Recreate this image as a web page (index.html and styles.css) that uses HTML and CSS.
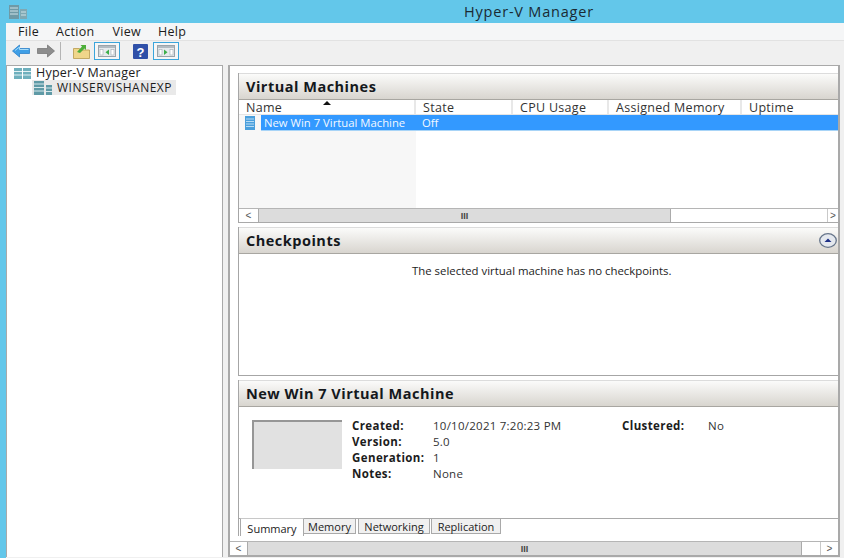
FILE: index.html
```html
<!DOCTYPE html>
<html lang="en">
<head>
<meta charset="UTF-8" />
<title>Hyper-V Manager</title>
<link rel="stylesheet" href="styles.css">
</head>
<body>
<header class="titlebar">
  <svg class="title-icon" width="18" height="14" viewBox="0 0 18 14">
    <rect x="0" y="0" width="10" height="14" fill="#6f9aa6"/>
    <path d="M1 3h8M1 6h8M1 9h8" stroke="#cfe3e8" stroke-width="1"/>
    <rect x="11" y="4" width="7" height="10" fill="#7fa8b3"/>
    <path d="M12 7h5M12 10h5" stroke="#cfe3e8" stroke-width="1"/>
  </svg>
  <span class="title-text">Hyper-V Manager</span>
</header>

<div class="window">
  <nav class="menubar">
    <span class="menu-item menu-file">File</span>
    <span class="menu-item menu-action">Action</span>
    <span class="menu-item menu-view">View</span>
    <span class="menu-item">Help</span>
  </nav>

  <div class="toolbar">
    <svg class="tool tool-back" width="18" height="14" viewBox="0 0 18 14">
      <path d="M0.5 7L7.5 1v3.5H17.5v5H7.5V13z" fill="#3f9fe6" stroke="#1f78c4" stroke-width="0.7"/>
      <path d="M3 6.5L7.5 3v2.5h9" fill="none" stroke="#a8dcf8" stroke-width="1"/>
    </svg>
    <svg class="tool tool-forward" width="18" height="14" viewBox="0 0 18 14">
      <path d="M17.5 7L10.5 1v3.5H0.5v5H10.5V13z" fill="#8d8d8d" stroke="#6f6f6f" stroke-width="0.7"/>
    </svg>
    <span class="tool-sep"></span>
    <svg class="tool tool-folder" width="17" height="15" viewBox="0 0 17 15">
      <path d="M0.5 4.5h6l1 1.5h9v8.5H0.5z" fill="#f0d68a" stroke="#b89a4c" stroke-width="0.8"/>
      <path d="M4 8L9 2.5 7.5 1H13v5l-1.5-1.5L7 9z" fill="#4dae3a"/>
    </svg>
    <span class="tool-box tool-box-first">
      <svg width="18" height="12" viewBox="0 0 18 12">
        <rect x="0.5" y="0.5" width="17" height="11" fill="#e6eaed" stroke="#9aa3aa"/>
        <rect x="1" y="1" width="16" height="2" fill="#b3bbc1"/>
        <rect x="2" y="4.500" width="3" height="5.500" fill="#fff" stroke="#a3acb3" stroke-width="0.6"/>
        <rect x="13" y="4.500" width="3" height="5.500" fill="#fff" stroke="#a3acb3" stroke-width="0.6"/>
        <path d="M11 4.500v5.500L7.500 7.250z" fill="#3dae4a"/>
      </svg>
    </span>
    <svg class="tool tool-help" width="15" height="15" viewBox="0 0 15 15">
      <rect width="15" height="15" rx="1" fill="#2f50a8"/>
      <text x="7.5" y="12.5" class="help-mark">?</text>
    </svg>
    <span class="tool-box">
      <svg width="18" height="12" viewBox="0 0 18 12">
        <rect x="0.5" y="0.5" width="17" height="11" fill="#e6eaed" stroke="#9aa3aa"/>
        <rect x="1" y="1" width="16" height="2" fill="#b3bbc1"/>
        <rect x="2" y="4.500" width="3" height="5.500" fill="#fff" stroke="#a3acb3" stroke-width="0.6"/>
        <rect x="13" y="4.500" width="3" height="5.500" fill="#fff" stroke="#a3acb3" stroke-width="0.6"/>
        <path d="M7 4.500v5.500l3.500-2.750z" fill="#3dae4a"/>
      </svg>
    </span>
  </div>

  <div class="panes">
    <aside class="tree">
      <div class="tree-root">
        <svg width="17" height="11" viewBox="0 0 17 11">
          <rect width="8" height="11" fill="#6fb0bd"/>
          <rect x="9" width="8" height="11" fill="#6fb0bd"/>
          <path d="M0 3.500h8M0 7h8M9 3.500h8M9 7h8" stroke="#e3f1f4" stroke-width="1"/>
        </svg>
        <span>Hyper-V Manager</span>
      </div>
      <div class="tree-node">
        <svg width="18" height="14" viewBox="0 0 18 14">
          <rect width="10" height="14" fill="#5f9aa6"/>
          <path d="M0 3h10M0 6.500h10M0 10h10" stroke="#d7e8ec" stroke-width="1"/>
          <rect x="12" y="4" width="6" height="10" fill="#5f9aa6"/>
          <path d="M12 7h6M12 10.500h6" stroke="#d7e8ec" stroke-width="1"/>
        </svg>
        <span>WINSERVISHANEXP</span>
      </div>
    </aside>

    <main class="content">
      <div class="panels">
        <section class="panel panel-vms">
          <h2 class="panel-head">Virtual Machines</h2>
          <div class="columns">
            <div class="col col-name">Name<span class="sort-mark"></span></div>
            <div class="col col-state">State</div>
            <div class="col col-cpu">CPU Usage</div>
            <div class="col col-mem">Assigned Memory</div>
            <div class="col col-up">Uptime</div>
          </div>
          <div class="vm-list">
            <div class="vm-row">
              <svg class="vm-icon" width="10" height="14" viewBox="0 0 10 14">
                <rect width="10" height="14" fill="#4a9fdc"/>
                <path d="M1 3h8M1 5.500h8M1 8h8M1 10.500h8" stroke="#b7dcf5" stroke-width="1"/>
              </svg>
              <div class="vm-selected">
                <span class="vm-name">New Win 7 Virtual Machine</span>
                <span>Off</span>
              </div>
            </div>
          </div>
          <div class="hscroll">
            <span class="sb-btn sb-left">&lt;</span>
            <span class="sb-thumb sb-thumb-vm">III</span>
            <span class="sb-rest"></span>
            <span class="sb-btn sb-right">&gt;</span>
          </div>
        </section>

        <section class="panel panel-checkpoints">
          <h2 class="panel-head panel-head-row">
            Checkpoints
            <svg width="18" height="15" viewBox="0 0 18 15">
              <ellipse cx="9" cy="7.500" rx="8.300" ry="6.800" fill="#e4e8ee" stroke="#66758a" stroke-width="1.300"/>
              <path d="M5.500 9L9 5.500 12.500 9z" fill="#1d2f86"/>
            </svg>
          </h2>
          <p class="empty-note">The selected virtual machine has no checkpoints.</p>
        </section>

        <section class="panel panel-details">
          <h2 class="panel-head">New Win 7 Virtual Machine</h2>
          <div class="details-body">
            <div class="thumb"></div>
            <dl class="facts">
              <dt>Created:</dt><dd>10/10/2021 7:20:23 PM</dd>
              <dt>Version:</dt><dd>5.0</dd>
              <dt>Generation:</dt><dd>1</dd>
              <dt>Notes:</dt><dd>None</dd>
            </dl>
            <dl class="facts facts-side">
              <dt>Clustered:</dt><dd>No</dd>
            </dl>
          </div>
          <div class="tabs">
            <span class="tab tab-active">Summary</span>
            <span class="tab tab-memory">Memory</span>
            <span class="tab tab-network">Networking</span>
            <span class="tab tab-replication">Replication</span>
          </div>
        </section>
      </div>

      <div class="hscroll hscroll-outer">
        <span class="sb-btn sb-left-outer">&lt;</span>
        <span class="sb-thumb sb-thumb-outer">III</span>
        <span class="sb-rest"></span>
        <span class="sb-btn sb-right">&gt;</span>
      </div>
    </main>
  </div>
</div>
</body>
</html>
```

FILE: styles.css
```css
* {
  box-sizing: border-box;
}

html, body {
  margin: 0;
  height: 558px;
  overflow: hidden;
}

body {
  background: #63c7ea;
  font-family: "Open Sans", "Noto Sans", sans-serif;
  font-size: 11px;
  color: #1c1c1c;
  display: flex;
  flex-direction: column;
}

/* Title bar */
.titlebar {
  height: 23px;
  flex: none;
  display: flex;
  align-items: center;
  padding-left: 9px;
}

.title-icon {
  flex: none;
}

.title-text {
  margin-left: 437px;
  font-size: 14.5px;
  letter-spacing: 0.8px;
  color: #1a2a33;
}

.window {
  flex: 1;
  margin-left: 6px;
  display: flex;
  flex-direction: column;
  background: #f0f0f0;
  min-height: 0;
}

/* Menu and toolbar */
.menubar {
  height: 18px;
  flex: none;
  display: flex;
  align-items: center;
  padding: 0 0 1px 12px;
  background: #f5f6f7;
  border-bottom: 1px solid #e2e2e2;
  font-size: 12.5px;
  letter-spacing: 0.3px;
}

.menu-file { margin-right: 17px; }
.menu-action { margin-right: 18px; }
.menu-view { margin-right: 17px; }

.toolbar {
  height: 24px;
  flex: none;
  display: flex;
  align-items: center;
  padding: 0 0 4px 6px;
  background: #f0f0f0;
}

.tool {
  flex: none;
}

.tool-forward { margin-left: 7px; }

.tool-sep {
  width: 1px;
  height: 18px;
  margin-left: 5px;
  background: #b4b4b4;
}

.tool-folder { margin-left: 12px; }

.tool-box {
  width: 26px;
  height: 18px;
  margin-left: 4px;
  border: 1px solid #3aa5dc;
  background: #f6f6f6;
  display: flex;
  align-items: center;
  justify-content: center;
}

.tool-help { margin-left: 13px; }
.tool-help + .tool-box { margin-left: 5px; }

.help-mark {
  font-family: "Liberation Sans", sans-serif;
  font-size: 13px;
  font-weight: 700;
  fill: #fff;
  text-anchor: middle;
}

/* Two panes */
.panes {
  flex: 1;
  min-height: 0;
  display: flex;
  gap: 5px;
  padding-bottom: 1px;
}

.tree {
  width: 217px;
  flex: none;
  background: #fff;
  border: 1px solid #a9a9a9;
  border-bottom: 0;
  padding: 0 0 0 7px;
}

.tree-root {
  display: flex;
  align-items: center;
  gap: 5px;
  height: 14px;
  line-height: 14px;
  font-size: 12.5px;
  letter-spacing: 0.2px;
}

.tree-node {
  display: flex;
  align-items: center;
  gap: 5px;
  width: 144px;
  height: 15px;
  line-height: 15px;
  margin-left: 18px;
  background: #e9e9e9;
  padding-left: 2px;
  font-size: 12px;
  letter-spacing: 0.5px;
  white-space: nowrap;
}

.content {
  width: 612px;
  flex: none;
  background: #fff;
  border: 1px solid #a9a9a9;
  border-right-width: 2px;
  border-left-width: 2px;
  display: flex;
  flex-direction: column;
}

.panels {
  flex: 1;
  min-height: 0;
  padding: 7px 0 0 8px;
  display: flex;
  flex-direction: column;
}

/* Panels */
.panel {
  border-left: 1px solid #a6a6a6;
  display: flex;
  flex-direction: column;
}

.panel-head {
  height: 27px;
  flex: none;
  margin: 0;
  padding: 0 0 0 7px;
  display: flex;
  align-items: center;
  font-size: 14.5px;
  font-weight: 700;
  letter-spacing: 0.5px;
  color: #14181c;
  background: linear-gradient(#fbfbfa, #d8d5cf);
  border-top: 1px solid #dcdcdc;
  border-bottom: 1px solid #a8a6a1;
}

.panel-head-row {
  justify-content: space-between;
  padding-right: 1px;
}

.panel-vms {
  height: 150px;
  flex: none;
}

.columns {
  height: 15px;
  flex: none;
  display: flex;
  align-items: center;
  background: #fff;
  border-bottom: 1px solid #e5e5e5;
  color: #333;
  font-size: 12.5px;
  letter-spacing: 0.3px;
}

.col {
  height: 100%;
  padding-left: 7px;
  border-right: 2px solid #e8e8e8;
  display: flex;
  align-items: center;
}

.col-name { width: 177px; }
.col-state { width: 97px; }
.col-cpu { width: 96px; }
.col-mem { width: 133px; }
.col-up { flex: 1; border-right: 0; }

.sort-mark {
  width: 0;
  height: 0;
  margin: -8px 0 0 41px;
  border-left: 4px solid transparent;
  border-right: 4px solid transparent;
  border-bottom: 4px solid #111;
}

.vm-list {
  flex: 1;
  min-height: 0;
  background: linear-gradient(90deg, #f7f7f7 177px, #fff 177px);
}

.vm-row {
  height: 16px;
  display: flex;
  align-items: center;
  padding-left: 6px;
}

.vm-icon {
  flex: none;
}

.vm-selected {
  flex: 1;
  height: 16px;
  margin-left: 6px;
  display: flex;
  align-items: center;
  padding: 0 0 1px 3px;
  background: #3399ff;
  border-bottom: 1px solid #a8d4f7;
  color: #f2f8ff;
  font-size: 11.3px;
}

.vm-name {
  width: 158px;
}

.panel-checkpoints {
  height: 149px;
  flex: none;
  margin-top: 4px;
  border-bottom: 1px solid #a6a6a6;
}

.empty-note {
  margin: 9px 0 0;
  padding-left: 173px;
  font-size: 11.4px;
  white-space: nowrap;
}

.panel-details {
  flex: 1;
  min-height: 0;
  margin-top: 4px;
}

.details-body {
  flex: 1;
  min-height: 0;
  display: flex;
  padding: 13px 0 0 13px;
  font-size: 11.5px;
}

.thumb {
  width: 90px;
  height: 49px;
  flex: none;
  background: #e1e1e1;
  border-top: 2px solid #969696;
  border-left: 2px solid #969696;
}

.facts {
  margin: -3px 0 0 10px;
  width: 270px;
  flex: none;
  display: grid;
  grid-template-columns: 81px 1fr;
  grid-auto-rows: 16px;
  align-items: center;
}

.facts-side {
  width: 140px;
  margin-left: 0;
  grid-template-columns: 86px 1fr;
  align-self: flex-start;
}

.facts dt {
  font-weight: 700;
  letter-spacing: 0.4px;
}

.facts dd {
  margin: 0;
  color: #333;
  letter-spacing: 0.25px;
}

/* Tabs */
.tabs {
  height: 18px;
  flex: none;
  display: flex;
  align-items: flex-start;
  padding-left: 1px;
  background: linear-gradient(#a9a9a9 1px, #fff 1px);
}

.tab {
  height: 16px;
  display: flex;
  align-items: center;
  justify-content: center;
  font-size: 11px;
  background: #f0f0f0;
  border: 1px solid #a9a9a9;
}

.tab-active {
  width: 64px;
  height: 18px;
  padding-top: 1px;
  background: #fff;
  border-bottom: 0;
  border-top-color: #c8c8c8;
}

.tab-memory { width: 52px; border-left: 0; }
.tab-network { width: 72px; margin-left: 2px; }
.tab-replication { width: 70px; margin-left: 1px; }

/* Scroll bars */
.hscroll {
  height: 15px;
  flex: none;
  display: flex;
  background: #fff;
  border-top: 1px solid #b5b5b5;
  border-bottom: 1px solid #a9a9a9;
  font-family: "Liberation Sans", sans-serif;
  font-size: 10px;
}

.sb-btn {
  flex: none;
  display: flex;
  align-items: center;
  justify-content: center;
  background: #fff;
  color: #555;
}

.sb-left { width: 19px; }
.sb-left-outer { width: 17px; }
.sb-right { width: 11px; border-left: 1px solid #c9c9c9; }

.sb-thumb {
  flex: none;
  display: flex;
  align-items: center;
  justify-content: center;
  background: #dcdcdc;
  border-left: 1px solid #ababab;
  border-right: 1px solid #ababab;
  color: #444;
  font-size: 9px;
  font-weight: 700;
}

.sb-thumb-vm { width: 413px; }
.sb-thumb-outer { width: 555px; }

.sb-rest {
  flex: 1;
}

.hscroll-outer {
  margin-top: 5px;
}

.hscroll-outer .sb-right {
  width: 18px;
}
```
